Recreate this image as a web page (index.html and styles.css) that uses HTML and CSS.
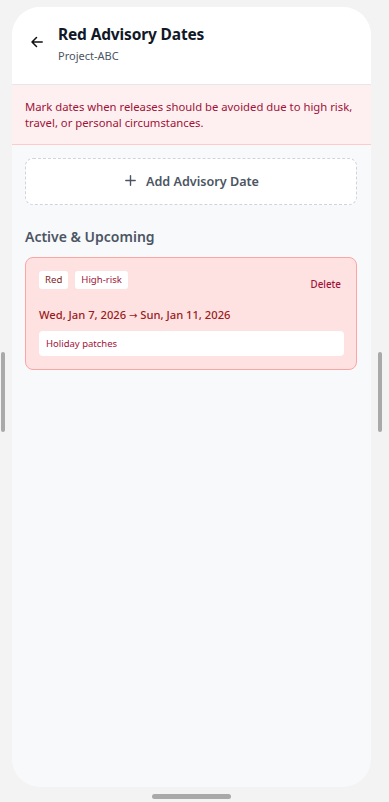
FILE: index.html
```html
<!DOCTYPE html>
<html lang="en">
<head>
<meta charset="utf-8">
<title>Red Advisory Dates</title>
<link rel="stylesheet" href="styles.css">
</head>
<body>
<div class="device">
  <div class="phone">
    <header class="header">
      <button class="back" aria-label="Back">
        <svg width="12" height="12" viewBox="0 0 12 12" fill="none" stroke="#111" stroke-width="1.5" stroke-linecap="round" stroke-linejoin="round"><path d="M11.2 6H1M5.5 1.5 1 6l4.5 4.5"/></svg>
      </button>
      <div class="titles">
        <h1 class="title">Red Advisory Dates</h1>
        <div class="subtitle">Project-ABC</div>
      </div>
    </header>
    <div class="banner">Mark dates when releases should be avoided due to high risk, travel, or personal circumstances.</div>
    <div class="content">
      <button class="add-btn">
        <svg class="plus" width="11" height="11" viewBox="0 0 11 11" fill="none" stroke="#4b5563" stroke-width="1.4" stroke-linecap="round"><path d="M5.5 0.8v9.4M0.8 5.5h9.4"/></svg>
        <span>Add Advisory Date</span>
      </button>
      <h2 class="section-title">Active &amp; Upcoming</h2>
      <div class="card">
        <div class="card-top">
          <div class="chips">
            <span class="chip">Red</span>
            <span class="chip">High-risk</span>
          </div>
          <button class="delete">Delete</button>
        </div>
        <div class="dates">Wed, Jan 7, 2026 <span class="arrow">→</span> Sun, Jan 11, 2026</div>
        <div class="note">Holiday patches</div>
      </div>
    </div>
  </div>
  <div class="side side-left"></div>
  <div class="side side-right"></div>
  <div class="home"></div>
</div>
</body>
</html>
```
FILE: styles.css
```css
* { box-sizing: border-box; }
html, body { margin: 0; padding: 0; }
body {
  background: #f3f3f3;
  font-family: "Noto Sans", "Open Sans", sans-serif;
  width: 389px;
  height: 802px;
  overflow: hidden;
}
.device { position: relative; width: 389px; height: 802px; padding: 7px 18px 0 12px; }
.phone {
  width: 359px;
  height: 780px;
  background: #f8f9fb;
  border-radius: 28px;
  overflow: hidden;
  display: flex;
  flex-direction: column;
}
.header {
  background: #fff;
  height: 78px;
  border-bottom: 1px solid #e5e7eb;
  display: flex;
  align-items: flex-start;
  padding: 17px 0 0 19px;
}
.back {
  border: 0; background: none; padding: 0; margin: 12px 0 0 0;
  width: 12px; height: 12px; display: flex;
}
.titles { margin-left: 15px; }
.title {
  margin: 0;
  font-size: 15.5px;
  font-weight: 700;
  color: #111827;
  line-height: 20px;
  letter-spacing: -0.15px;
}
.subtitle {
  margin-top: 5px;
  font-size: 11px;
  color: #4b5563;
  line-height: 14px;
}
.banner {
  background: #fef0f0;
  border-bottom: 1px solid #fecaca;
  color: #9f1239;
  font-size: 11.3px;
  line-height: 16px;
  padding: 14px 13px 13px 13px;
}
.content { padding: 13px 14px 0 13px; display: flex; flex-direction: column; }
.add-btn {
  height: 47px;
  background: #fff;
  border: 1px dashed #cfd4dc;
  border-radius: 8px;
  display: flex; align-items: center; justify-content: center; gap: 10px;
  font-family: inherit;
  font-size: 12.6px;
  font-weight: 600;
  color: #4b5563;
  padding: 0 0 0 2px;
}
.plus { margin-top: -2px; }
.section-title {
  margin: 22px 0 0 0;
  font-size: 14px;
  font-weight: 600;
  color: #4b5563;
  line-height: 20px;
}
.card {
  margin-top: 10px;
  background: #fee2e2;
  border: 1px solid #fca5a5;
  border-radius: 8px;
  padding: 13px 12px 13px 13px;
}
.card-top { display: flex; justify-content: space-between; align-items: flex-start; height: 18px; }
.chips { display: flex; gap: 7px; }
.chip {
  background: #fff;
  border-radius: 3px;
  height: 18px;
  padding: 0 6px;
  font-size: 9.6px;
  line-height: 18px;
  color: #9f1239;
}
.chip:first-child { color: #7f1d1d; }
.delete {
  border: 0; background: none; padding: 0;
  margin: 7px 3px 0 0;
  font-family: inherit;
  font-size: 9.8px;
  font-weight: 500;
  color: #9f1239;
  line-height: 14px;
}
.dates {
  margin-top: 18px;
  font-size: 11.2px;
  font-weight: 500;
  color: #991b1b;
  line-height: 16px;
}
.arrow { font-family: "DejaVu Sans", sans-serif; font-size: 10px; }
.note {
  margin-top: 7px;
  background: #fff;
  border-radius: 4px;
  height: 25px;
  padding: 0 7px;
  font-size: 9.5px;
  line-height: 25px;
  color: #9f1239;
}
.side { position: absolute; top: 352px; width: 4px; height: 80px; background: #a9a9a9; border-radius: 2px; }
.side-left { left: 1px; }
.side-right { left: 378px; }
.home { position: absolute; left: 152px; top: 794px; width: 79px; height: 5px; border-radius: 3px; background: #a9a9a9; }
```
